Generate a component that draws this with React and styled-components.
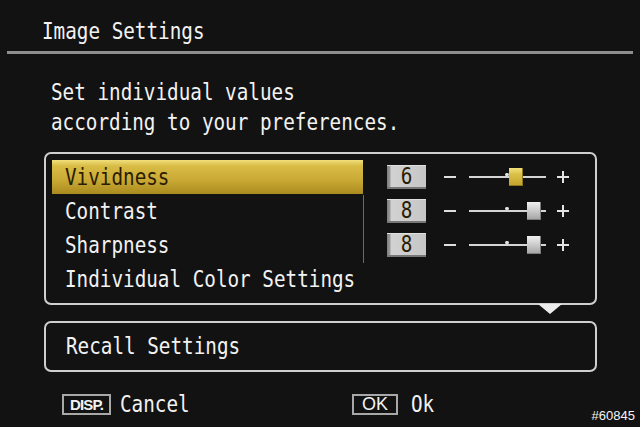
import React from 'react';
import styled, { createGlobalStyle, css } from 'styled-components';

const GlobalStyle = createGlobalStyle`
    html, body {
        margin: 0;
        padding: 0;
        background-color: #121212;
    }
    * {
        box-sizing: border-box;
    }
`;

// camera menu glyphs are tall and narrow
const tall = css`
    display: inline-block;
    transform: scaleY(1.2);
    transform-origin: center;
`;

const Screen = styled.div`
    position: relative;
    width: 640px;
    height: 427px;
    background-color: #121212;
    font-family: "DejaVu Sans Mono", "Liberation Mono", monospace;
    font-size: 19.3px;
    color: #f2f2f2;
    overflow: hidden;
`;

const Header = styled.div`
    height: 51px;
    padding: 12px 0 0 42px;
    display: flex;
    align-items: center;
`;

const Text = styled.span`
    ${tall};
    white-space: pre;
    color: ${(p) => p.$dark ? '#2a1c02' : '#f2f2f2'};
`;

const Divider = styled.div`
    height: 3px;
    margin: 0 7px;
    background-color: #8e8e8e;
`;

const Intro = styled.div`
    margin: 24px 0 0 51px;
    line-height: 30px;
    display: flex;
    flex-direction: column;
`;

const Panel = styled.div`
    position: relative;
    width: 553px;
    margin-left: 44px;
    border: 2px solid #cfcfcf;
    border-radius: 7px;
`;

const MainPanel = styled(Panel)`
    margin-top: 14px;
    height: 153px;
    padding: 6px 0 0 6px;
    display: flex;
    align-items: flex-start;
`;

const List = styled.div`
    width: 311px;
    display: flex;
    flex-direction: column;
`;

const Row = styled.div`
    height: 34px;
    padding-left: 13px;
    display: flex;
    align-items: center;
    background: ${(p) => p.$active
        ? 'linear-gradient(180deg, #f1df7c 0%, #d8bb45 18%, #c9a934 60%, #a98a1e 100%)'
        : 'transparent'};
`;

const ScrollLine = styled.div`
    width: 1px;
    height: 68px;
    margin-top: 35px;
    background-color: #6a6a6a;
`;

const Controls = styled.div`
    margin-left: 23px;
    display: flex;
    flex-direction: column;
`;

const ControlRow = styled.div`
    height: 34px;
    display: flex;
    align-items: center;
`;

const ValueBox = styled.div`
    width: 39px;
    height: 24px;
    display: flex;
    align-items: center;
    justify-content: center;
    background: linear-gradient(90deg, #7e7e7e 0, #9a9a9a 3px, #d2d2d2 4px, #c6c6c6 100%);
    border-top: 1px solid #e0e0e0;
    border-bottom: 2px solid #777;
    color: #1e1e1e;
`;

const Minus = styled.div`
    width: 12px;
    height: 2px;
    margin-left: 18px;
    background-color: #dedede;
`;

const Track = styled.div`
    position: relative;
    width: 77px;
    height: 2px;
    margin-left: 13px;
    background-color: #d4d4d4;
`;

const Tick = styled.div`
    position: absolute;
    left: 36px;
    top: -3px;
    width: 4px;
    height: 3px;
    border-radius: 2px;
    background-color: #e4e4e4;
`;

const Knob = styled.div`
    position: absolute;
    top: -8px;
    width: 14px;
    height: 18px;
    background: ${(p) => p.$active
        ? 'linear-gradient(180deg, #f3e27a 0%, #dcc24a 35%, #c4a52e 100%)'
        : 'linear-gradient(180deg, #f0f0f0 0%, #d0d0d0 45%, #a6a6a6 100%)'};
    border-right: 1px solid ${(p) => p.$active ? '#8c7418' : '#7c7c7c'};
    border-bottom: 1px solid ${(p) => p.$active ? '#8c7418' : '#7c7c7c'};
`;

const PlusIcon = styled.svg`
    margin-left: 11px;
    width: 12px;
    height: 12px;
`;

const MoreArrow = styled.div`
    position: absolute;
    left: 492px;
    bottom: -11px;
    width: 0;
    height: 0;
    border-left: 12px solid transparent;
    border-right: 12px solid transparent;
    border-top: 10px solid #ececec;
`;

const RecallPanel = styled(Panel)`
    margin-top: 16px;
    height: 51px;
    padding-left: 20px;
    display: flex;
    align-items: center;
`;

const Footer = styled.div`
    margin-top: 21px;
    padding-left: 62px;
    display: grid;
    grid-template-columns: 290px auto;
`;

const Action = styled.div`
    display: flex;
    align-items: center;
    gap: ${(p) => p.$gap}px;
`;

const Key = styled.div`
    width: ${(p) => p.$w}px;
    height: 21px;
    display: flex;
    align-items: center;
    justify-content: center;
    border: 2px solid #a8a8a8;
    font-family: "Liberation Sans", Arial, sans-serif;
    font-size: ${(p) => p.$size}px;
    font-weight: ${(p) => p.$bold ? 700 : 400};
    letter-spacing: ${(p) => p.$bold ? '-0.8px' : '0'};
    color: #f2f2f2;
`;

const Watermark = styled.div`
    position: absolute;
    right: 5px;
    bottom: 4px;
    font-family: "Liberation Sans", Arial, sans-serif;
    font-size: 13px;
    color: #f4f4f4;
`;

const items = [
    { label: 'Vividness', value: 6, active: true },
    { label: 'Contrast', value: 8 },
    { label: 'Sharpness', value: 8 },
    { label: 'Individual Color Settings' },
];

// slider centre is 5, one step is 9px
const knobLeft = (v) => 38 + (v - 5) * 9 - 7;

function Slider({ value, active }) {
    return (
        <Track>
            <Tick />
            <Knob $active={active} style={{ left: knobLeft(value) }} />
        </Track>
    );
}

export default function App() {
    return (
        <Screen>
            <GlobalStyle />
            <Header>
                <Text>Image Settings</Text>
            </Header>
            <Divider />
            <Intro>
                <Text>Set individual values</Text>
                <Text>according to your preferences.</Text>
            </Intro>
            <MainPanel>
                <List>
                    {items.map((item) => (
                        <Row key={item.label} $active={item.active}>
                            <Text $dark={item.active}>{item.label}</Text>
                        </Row>
                    ))}
                </List>
                <ScrollLine />
                <Controls>
                    {items.filter((i) => i.value !== undefined).map((item) => (
                        <ControlRow key={item.label}>
                            <ValueBox>
                                <Text $dark>{item.value}</Text>
                            </ValueBox>
                            <Minus />
                            <Slider value={item.value} active={item.active} />
                            <PlusIcon viewBox="0 0 12 12">
                                <path d="M0 6h12M6 0v12" stroke="#e4e4e4" strokeWidth="2" />
                            </PlusIcon>
                        </ControlRow>
                    ))}
                </Controls>
                <MoreArrow />
            </MainPanel>
            <RecallPanel>
                <Text>Recall Settings</Text>
            </RecallPanel>
            <Footer>
                <Action $gap={9}>
                    <Key $w={49} $size={15} $bold>DISP.</Key>
                    <Text>Cancel</Text>
                </Action>
                <Action $gap={13}>
                    <Key $w={46} $size={18}>OK</Key>
                    <Text>Ok</Text>
                </Action>
            </Footer>
            <Watermark>#60845</Watermark>
        </Screen>
    );
}
